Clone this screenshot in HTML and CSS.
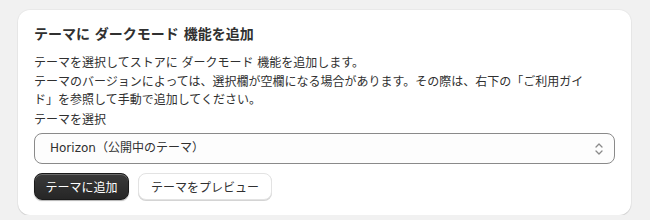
FILE: index.html
```html
<!DOCTYPE html>
<html lang="ja">
  <head>
    <meta charset="UTF-8" />
    <meta name="viewport" content="width=device-width, initial-scale=1.0" />
    <title>ダークモード 機能を追加</title>
    <link rel="stylesheet" href="styles.css">
  </head>
  <body>
    <!-- Dark mode install card -->
    <div class="card">
      <h2 class="card-title">テーマに ダークモード 機能を追加</h2>
      <p class="card-text">
        テーマを選択してストアに ダークモード 機能を追加します。<br>
        テーマのバージョンによっては、選択欄が空欄になる場合があります。その際は、右下の「ご利用ガイ<span class="nowrap">ド」</span>を参照して手動で追加してください。
      </p>

      <!-- Theme picker -->
      <label class="field-label" for="themeSelect">テーマを選択</label>
      <div class="select">
        <select id="themeSelect">
          <option>Horizon（公開中のテーマ）</option>
        </select>
        <svg class="select-icon" width="10" height="14" viewBox="0 0 10 14" fill="none">
          <path d="M2 5l3-3 3 3M2 9l3 3 3-3" stroke="#8a8a8a" stroke-width="1.3" stroke-linecap="round" stroke-linejoin="round"/>
        </svg>
      </div>

      <!-- Actions -->
      <div class="actions">
        <button class="btn btn-primary">テーマに追加</button>
        <button class="btn btn-secondary">テーマをプレビュー</button>
      </div>
    </div>
  </body>
</html>
```

FILE: styles.css
```css
/* Page */
body {
  margin: 0;
  padding: 10px 19px 0 18px;
  background: #f1f1f1;
  font-family: "DejaVu Sans", "Noto Sans CJK JP", sans-serif;
  color: #303030;
  text-spacing-trim: space-all;
}

/* Card */
.card {
  background: #fff;
  border-radius: 12px;
  padding: 14px 16px 15px;
  box-shadow: 0 1px 1px rgba(0, 0, 0, 0.12), 0 0 0 1px rgba(0, 0, 0, 0.03);
}

.card-title {
  margin: 0 0 10px;
  font-size: 14px;
  line-height: 20px;
  font-weight: 700;
}

.card-text {
  max-width: 570px;
  margin: 0 0 1px;
  font-size: 12px;
  line-height: 18.5px;
}

/* keep the closing bracket with its word */
.nowrap {
  white-space: nowrap;
}

.field-label {
  display: block;
  font-size: 12px;
  line-height: 18px;
  margin-bottom: 4px;
}

/* Select */
.select {
  position: relative;
}

.select select {
  width: 100%;
  height: 31px;
  padding: 0 32px 0 15px;
  border: 1px solid #8a8a8a;
  border-radius: 8px;
  background: #fdfdfd;
  color: #303030;
  font-family: inherit;
  font-size: 12px;
  appearance: none;
  -webkit-appearance: none;
}

.select-icon {
  position: absolute;
  right: 11px;
  top: 9px;
}

/* Buttons */
.actions {
  display: flex;
  gap: 9px;
  margin-top: 9px;
}

.btn {
  height: 27px;
  padding: 0 10.5px;
  border-radius: 8px;
  font-family: inherit;
  font-size: 12px;
  cursor: pointer;
}

.btn-primary {
  border: 1px solid #1a1a1a;
  background: linear-gradient(#3a3a3a, #262626);
  color: #fff;
  box-shadow: inset 0 1px 0 rgba(255, 255, 255, 0.25), 0 1px 1px rgba(0, 0, 0, 0.3);
}

.btn-secondary {
  padding: 0 12px;
  border: 1px solid #e3e3e3;
  background: #fff;
  color: #303030;
  box-shadow: 0 1px 0 #d4d4d4;
}
```
